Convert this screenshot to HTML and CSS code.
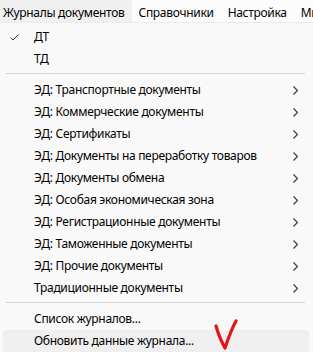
FILE: index.html
```html
<!DOCTYPE html>
<html lang="ru">
<head>
	<meta charset="UTF-8">
	<title>Журналы документов</title>
<link rel="stylesheet" href="styles.css">
</head>
<body>
	<div class="menubar">
		<div class="bar_item active">Журналы документов</div>
		<div class="bar_item">Справочники</div>
		<div class="bar_item">Настройка</div>
		<div class="bar_item">Ми</div>
	</div>
	<div class="menu">
		<div class="row"><span class="check"><svg width="9" height="7" viewBox="0 0 9 7"><path d="M0.5 3.5 L3 6 L8.5 0.5" fill="none" stroke="#333" stroke-width="1"/></svg></span><span class="label">ДТ</span><span></span></div>
		<div class="row"><span class="check"></span><span class="label">ТД</span><span></span></div>
		<div class="sep"></div>
		<div class="row"><span class="check"></span><span class="label">ЭД: Транспортные документы</span><span class="arrow"><svg width="5" height="9" viewBox="0 0 5 9"><path d="M0.5 0.5 L4.5 4.5 L0.5 8.5" fill="none" stroke="#333" stroke-width="1.1"/></svg></span></div>
		<div class="row"><span class="check"></span><span class="label">ЭД: Коммерческие документы</span><span class="arrow"><svg width="5" height="9" viewBox="0 0 5 9"><path d="M0.5 0.5 L4.5 4.5 L0.5 8.5" fill="none" stroke="#333" stroke-width="1.1"/></svg></span></div>
		<div class="row"><span class="check"></span><span class="label">ЭД: Сертификаты</span><span class="arrow"><svg width="5" height="9" viewBox="0 0 5 9"><path d="M0.5 0.5 L4.5 4.5 L0.5 8.5" fill="none" stroke="#333" stroke-width="1.1"/></svg></span></div>
		<div class="row"><span class="check"></span><span class="label">ЭД: Документы на переработку товаров</span><span class="arrow"><svg width="5" height="9" viewBox="0 0 5 9"><path d="M0.5 0.5 L4.5 4.5 L0.5 8.5" fill="none" stroke="#333" stroke-width="1.1"/></svg></span></div>
		<div class="row"><span class="check"></span><span class="label">ЭД: Документы обмена</span><span class="arrow"><svg width="5" height="9" viewBox="0 0 5 9"><path d="M0.5 0.5 L4.5 4.5 L0.5 8.5" fill="none" stroke="#333" stroke-width="1.1"/></svg></span></div>
		<div class="row"><span class="check"></span><span class="label">ЭД: Особая экономическая зона</span><span class="arrow"><svg width="5" height="9" viewBox="0 0 5 9"><path d="M0.5 0.5 L4.5 4.5 L0.5 8.5" fill="none" stroke="#333" stroke-width="1.1"/></svg></span></div>
		<div class="row"><span class="check"></span><span class="label">ЭД: Регистрационные документы</span><span class="arrow"><svg width="5" height="9" viewBox="0 0 5 9"><path d="M0.5 0.5 L4.5 4.5 L0.5 8.5" fill="none" stroke="#333" stroke-width="1.1"/></svg></span></div>
		<div class="row"><span class="check"></span><span class="label">ЭД: Таможенные документы</span><span class="arrow"><svg width="5" height="9" viewBox="0 0 5 9"><path d="M0.5 0.5 L4.5 4.5 L0.5 8.5" fill="none" stroke="#333" stroke-width="1.1"/></svg></span></div>
		<div class="row"><span class="check"></span><span class="label">ЭД: Прочие документы</span><span class="arrow"><svg width="5" height="9" viewBox="0 0 5 9"><path d="M0.5 0.5 L4.5 4.5 L0.5 8.5" fill="none" stroke="#333" stroke-width="1.1"/></svg></span></div>
		<div class="row"><span class="check"></span><span class="label">Традиционные документы</span><span class="arrow"><svg width="5" height="9" viewBox="0 0 5 9"><path d="M0.5 0.5 L4.5 4.5 L0.5 8.5" fill="none" stroke="#333" stroke-width="1.1"/></svg></span></div>
		<div class="sep"></div>
		<div class="row"><span class="check"></span><span class="label">Список журналов...</span><span></span></div>
		<div class="row hover"><span class="check"></span><span class="label">Обновить данные журнала...</span><span></span>
			<svg class="mark" width="26" height="32" viewBox="0 0 26 32">
				<path d="M3 7 C5 14 8 22 12 29 C15 20 18 11 23 2" fill="none" stroke="#e3151b" stroke-width="3.2" stroke-linecap="round" stroke-linejoin="round"/>
			</svg>
		</div>
	</div>
</body>
</html>
```
FILE: styles.css
```css
*{
	box-sizing: border-box;
}
body{
	margin: 0;
	width: 313px;
	height: 352px;
	overflow: hidden;
	background: #f9f9f9;
	font-family: "Noto Sans", "Liberation Sans", sans-serif;
	font-size: 12px;
	letter-spacing: -0.3px;
	color: #000;
}
.menubar{
	display: flex;
	height: 22px;
	background: #fcfcfc;
	white-space: nowrap;
	overflow: hidden;
}
.bar_item{
	padding: 3px 7px 0 7px;
	line-height: 19px;
}
.active{
	background: #f0f0f0;
	padding-left: 3px;
	width: 132px;
}
.menu{
	background: #f9f9f9;
	border-top: 1px solid #ebebeb;
	padding-top: 3px;
}
.row{
	position: relative;
	display: grid;
	grid-template-columns: 31px 1fr 16px;
	align-items: center;
	height: 22px;
	line-height: 22px;
	margin: 0 4px 0 3px;
	border-radius: 4px;
}
.check{
	display: flex;
	padding-left: 7px;
}
.label{
	white-space: nowrap;
}
.arrow{
	display: flex;
}
.sep{
	height: 9px;
	margin: 0 8px 0 6px;
	border-bottom: 5px solid #f9f9f9;
	border-top: 3px solid #f9f9f9;
	background: #d5d5d5;
}
.hover{
	background: #efefef;
}
.mark{
	position: absolute;
	left: 210px;
	top: -11px;
}
```
